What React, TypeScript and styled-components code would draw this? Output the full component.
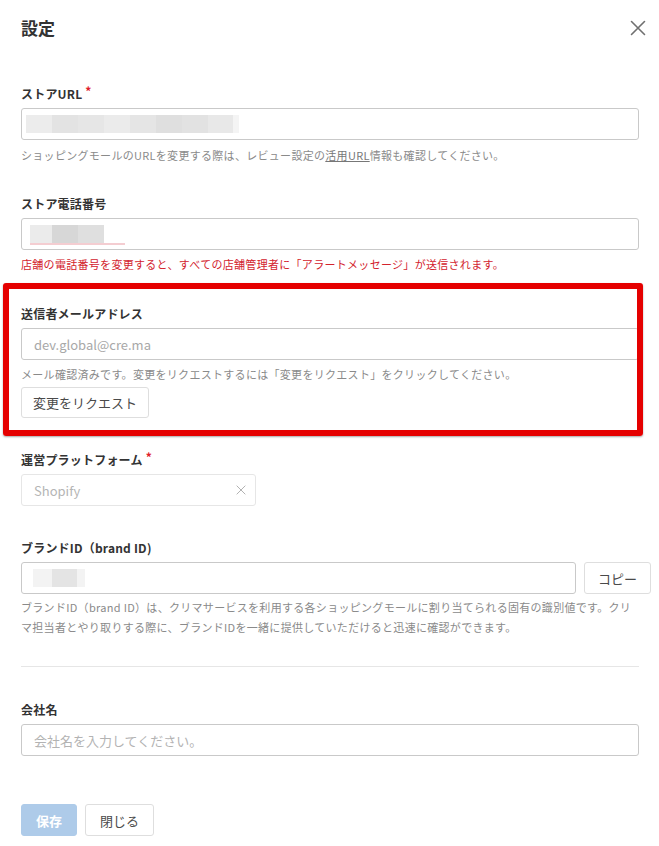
import React from "react";
import styled, { createGlobalStyle } from "styled-components";

const GlobalStyle = createGlobalStyle`
  html, body { margin: 0; padding: 0; background: #fff; }
  body { font-family: "Noto Sans CJK JP", "Noto Sans", sans-serif; color: #333; }
  * { box-sizing: border-box; }
`;

const Page = styled.div`
  position: relative;
  width: 659px;
  min-height: 846px;
  padding: 16px 20px 10px 21px;
  display: flex;
  flex-direction: column;
`;

const Header = styled.header`
  display: flex;
  align-items: center;
  justify-content: space-between;
  height: 24px;
`;

const Title = styled.h1`
  margin: 0;
  font-size: 17px;
  font-weight: 700;
  line-height: 24px;
  color: #333;
`;

const CloseButton = styled.button`
  border: 0;
  background: none;
  padding: 0;
  width: 18px;
  height: 18px;
  margin-right: -8px;
  display: flex;
  align-items: center;
  justify-content: center;
  color: #707070;
  cursor: pointer;
`;

const Field = styled.section<{ $mt?: number }>`
  margin-top: ${(p) => p.$mt ?? 32}px;
  display: flex;
  flex-direction: column;
`;

const Label = styled.label`
  display: flex;
  align-items: flex-start;
  font-size: 12px;
  font-weight: 700;
  line-height: 18px;
  margin-bottom: 5px;
  color: #333;
  letter-spacing: 0.2px;
`;

const Required = styled.span`
  color: #e0202a;
  font-size: 12px;
  line-height: 12px;
  margin-left: 3px;
`;

const RedactedBox = styled.div<{ $pl: number }>`
  height: 32px;
  border: 1px solid #c9c9c9;
  border-radius: 3px;
  background: #fff;
  display: flex;
  align-items: center;
  padding-left: ${(p) => p.$pl}px;
  flex: 1 1 auto;
  min-width: 0;
`;

const RedactStrip = styled.div<{ $underline?: boolean }>`
  display: flex;
  height: 18px;
  position: relative;
  ${(p) =>
    p.$underline
      ? `&::after { content: ""; position: absolute; left: 0; top: 18px; width: 95px; height: 2px; background: #f4cdd1; }`
      : ""}
`;

const RedactBlock = styled.span<{ $w: number; $c: string }>`
  display: block;
  width: ${(p) => p.$w}px;
  height: 18px;
  background: ${(p) => p.$c};
`;

const TextInput = styled.input`
  height: 32px;
  width: 100%;
  border: 1px solid #c9c9c9;
  border-radius: 3px;
  background: #fff;
  padding: 0 12px;
  font-family: inherit;
  font-size: 13px;
  color: #a8a8a8;
  outline: none;
  &::placeholder { color: #b3b3b3; }
`;

const Help = styled.p<{ $tone?: "muted" | "alert"; $lh?: number; $mt?: number }>`
  margin: ${(p) => p.$mt ?? 5}px 0 0;
  font-size: 11px;
  line-height: ${(p) => p.$lh ?? 18}px;
  letter-spacing: 0.3px;
  color: ${(p) => (p.$tone === "alert" ? "#d3232e" : "#8a8a8a")};
`;

const HelpLink = styled.span`
  text-decoration: underline;
  color: #777;
`;

const Button = styled.button<{ $variant?: "primary" | "default"; $h?: number; $px?: number }>`
  height: ${(p) => p.$h ?? 32}px;
  padding: 0 ${(p) => p.$px ?? 14}px;
  border-radius: 3px;
  font-family: inherit;
  font-size: 13px;
  line-height: 1;
  white-space: nowrap;
  cursor: pointer;
  flex: none;
  border: 1px solid ${(p) => (p.$variant === "primary" ? "#aecbe9" : "#dedede")};
  background: ${(p) => (p.$variant === "primary" ? "#aecbe9" : "#fff")};
  color: ${(p) => (p.$variant === "primary" ? "#fff" : "#4a4a4a")};
  font-weight: ${(p) => (p.$variant === "primary" ? 700 : 400)};
`;

const RequestRow = styled.div`
  margin-top: 4px;
  display: flex;
`;

const Select = styled.div`
  width: 235px;
  height: 32px;
  border: 1px solid #e6e6e6;
  border-radius: 3px;
  padding: 0 9px 0 12px;
  display: flex;
  align-items: center;
  justify-content: space-between;
  font-size: 13px;
  color: #b5b5b5;
`;

const ClearIcon = styled.span`
  display: flex;
  color: #a0a0a0;
`;

const CopyRow = styled.div`
  display: flex;
  gap: 8px;
  margin-right: -12px;
`;

const Divider = styled.hr`
  margin: 29px 0 0;
  border: 0;
  height: 1px;
  background: #e6e6e6;
`;

const Footer = styled.footer`
  margin-top: 48px;
  display: flex;
  gap: 8px;
`;

const Annotation = styled.div`
  position: absolute;
  left: 3px;
  top: 283px;
  width: 640px;
  height: 153px;
  border: 6px solid #e50000;
  border-radius: 3px;
  box-shadow: 0 1px 2px rgba(0, 0, 0, 0.35);
  pointer-events: none;
`;

type Block = { w: number; c: string };

const urlBlocks: Block[] = [
  { w: 26, c: "#ececec" },
  { w: 26, c: "#e3e3e3" },
  { w: 26, c: "#e6e6e6" },
  { w: 26, c: "#ebebeb" },
  { w: 26, c: "#e5e5e5" },
  { w: 26, c: "#dfdfdf" },
  { w: 26, c: "#e2e2e2" },
  { w: 25, c: "#e8e8e8" },
  { w: 6, c: "#f4f4f4" },
];

const phoneBlocks: Block[] = [
  { w: 22, c: "#ebebeb" },
  { w: 26, c: "#d7d7d7" },
  { w: 26, c: "#dfdfdf" },
];

const brandBlocks: Block[] = [
  { w: 19, c: "#f3f3f3" },
  { w: 25, c: "#e4e4e4" },
  { w: 8, c: "#f3f3f3" },
];

const Redacted = ({ blocks, underline }: { blocks: Block[]; underline?: boolean }) => (
  <RedactStrip $underline={underline}>
    {blocks.map((b, i) => (
      <RedactBlock key={i} $w={b.w} $c={b.c} />
    ))}
  </RedactStrip>
);

const XIcon = ({ size, stroke }: { size: number; stroke: number }) => (
  <svg width={size} height={size} viewBox="0 0 16 16" fill="none">
    <path d="M1.5 1.5 L14.5 14.5 M14.5 1.5 L1.5 14.5" stroke="currentColor" strokeWidth={stroke} strokeLinecap="round" />
  </svg>
);

export default function App() {
  return (
    <>
      <GlobalStyle />
      <Page>
        <Header>
          <Title>設定</Title>
          <CloseButton aria-label="閉じる">
            <XIcon size={16} stroke={1.6} />
          </CloseButton>
        </Header>

        <Field $mt={45}>
          <Label>
            ストアURL<Required>*</Required>
          </Label>
          <RedactedBox $pl={4}>
            <Redacted blocks={urlBlocks} />
          </RedactedBox>
          <Help $mt={6}>
            ショッピングモールのURLを変更する際は、レビュー設定の<HelpLink>活用URL</HelpLink>情報も確認してください。
          </Help>
        </Field>

        <Field $mt={31}>
          <Label>ストア電話番号</Label>
          <RedactedBox $pl={8}>
            <Redacted blocks={phoneBlocks} underline />
          </RedactedBox>
          <Help $tone="alert">
            店舗の電話番号を変更すると、すべての店舗管理者に「アラートメッセージ」が送信されます。
          </Help>
        </Field>

        <Field>
          <Label>送信者メールアドレス</Label>
          <TextInput readOnly value="dev.global@cre.ma" />
          <Help>
            メール確認済みです。変更をリクエストするには「変更をリクエスト」をクリックしてください。
          </Help>
          <RequestRow>
            <Button $h={31} $px={11}>変更をリクエスト</Button>
          </RequestRow>
        </Field>

        <Field $mt={33}>
          <Label>
            運営プラットフォーム<Required>*</Required>
          </Label>
          <Select>
            <span>Shopify</span>
            <ClearIcon>
              <XIcon size={10} stroke={1.3} />
            </ClearIcon>
          </Select>
        </Field>

        <Field $mt={33}>
          <Label>ブランドID（brand ID)</Label>
          <CopyRow>
            <RedactedBox $pl={11}>
              <Redacted blocks={brandBlocks} />
            </RedactedBox>
            <Button $variant="default" $px={13}>コピー</Button>
          </CopyRow>
          <Help $lh={20} $mt={3}>
            ブランドID（brand ID）は、クリマサービスを利用する各ショッピングモールに割り当てられる固有の識別値です。クリマ担当者とやり取りする際に、ブランドIDを一緒に提供していただけると迅速に確認ができます。
          </Help>
        </Field>

        <Divider />

        <Field $mt={34}>
          <Label>会社名</Label>
          <TextInput placeholder="会社名を入力してください。" />
        </Field>

        <Footer>
          <Button $variant="primary">保存</Button>
          <Button>閉じる</Button>
        </Footer>

        <Annotation />
      </Page>
    </>
  );
}
